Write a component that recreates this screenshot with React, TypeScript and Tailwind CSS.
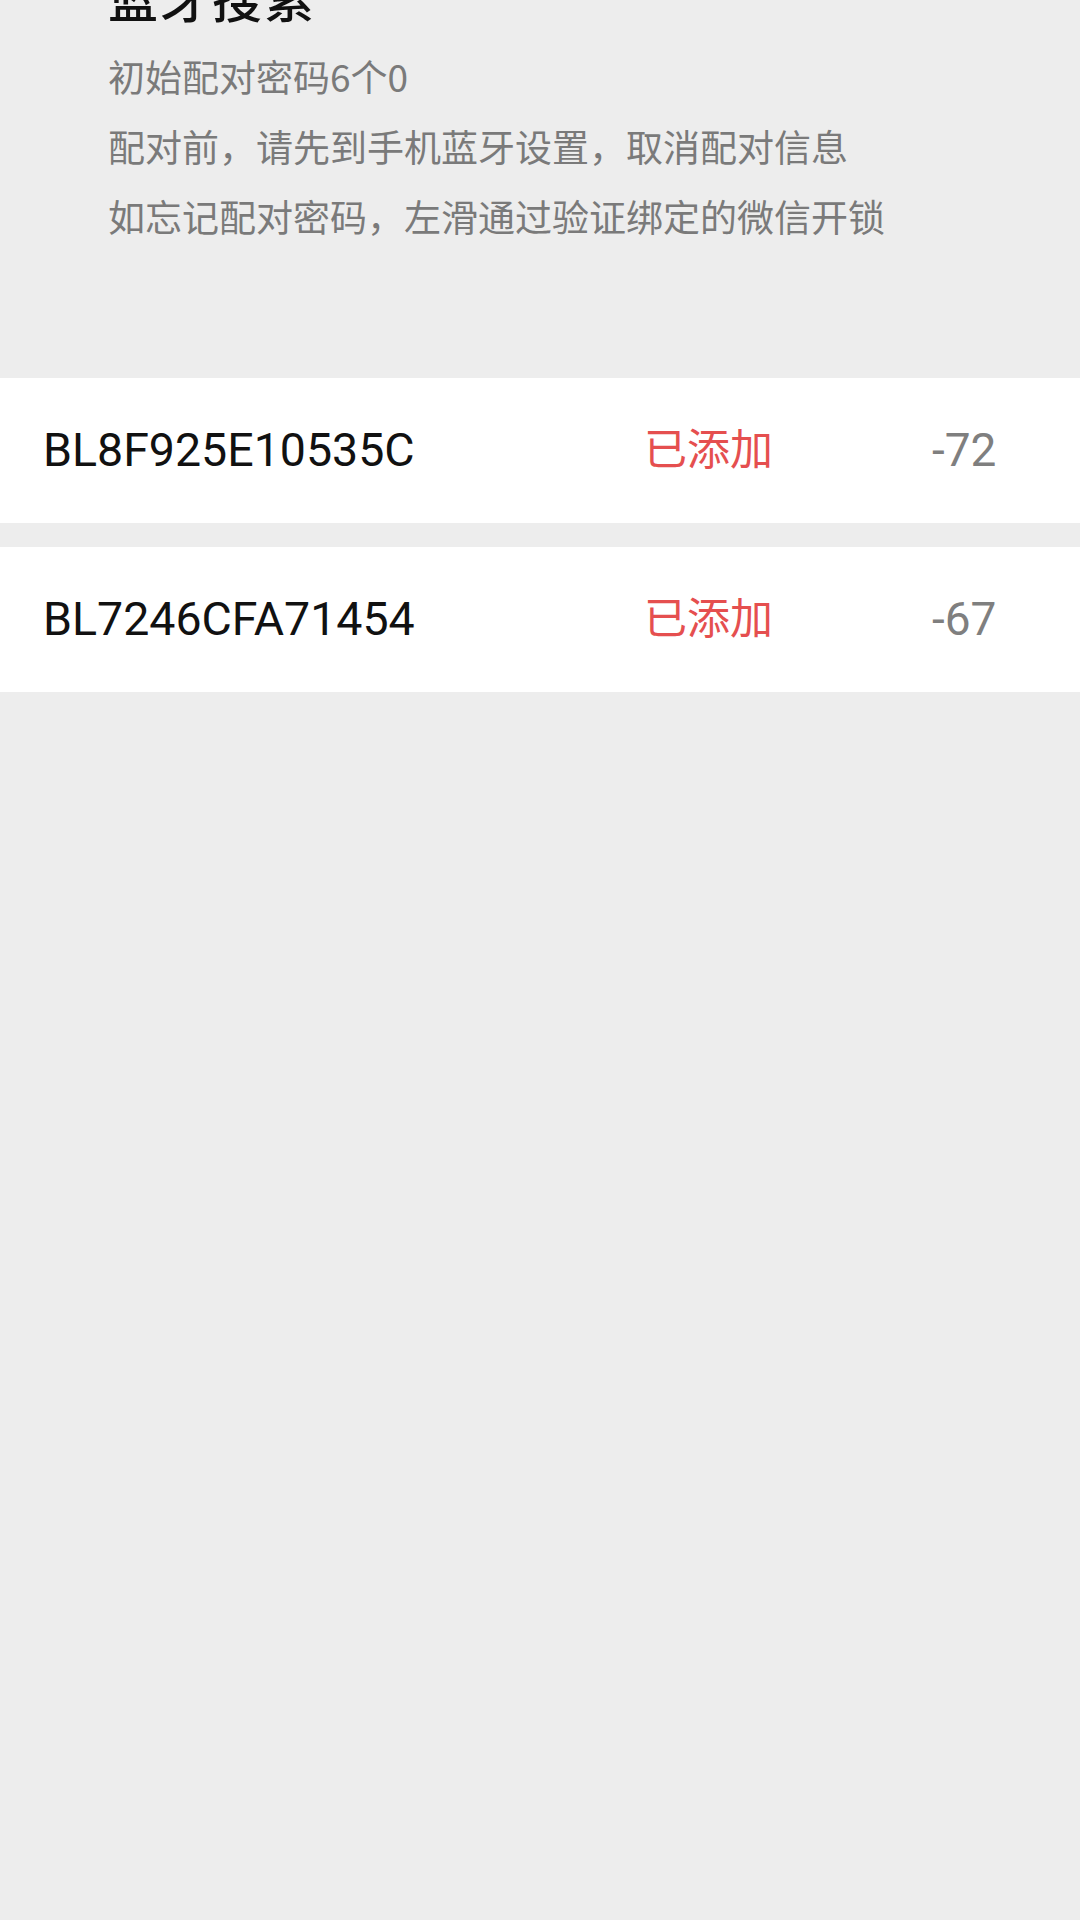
const cjk = { fontFamily: '"Noto Sans CJK SC", "Noto Sans", sans-serif' };
const latin = { fontFamily: 'Roboto, "Noto Sans CJK SC", sans-serif' };

type Device = { name: string; status: string; rssi: string };

const devices: Device[] = [
  { name: "BL8F925E10535C", status: "已添加", rssi: "-72" },
  { name: "BL7246CFA71454", status: "已添加", rssi: "-67" },
];

const tips = [
  "初始配对密码6个0",
  "配对前，请先到手机蓝牙设置，取消配对信息",
  "如忘记配对密码，左滑通过验证绑定的微信开锁",
];

function DeviceRow({ device }: { device: Device }) {
  return (
    <div className="flex h-[145px] items-center bg-white pl-[43px]">
      <div className="w-[601px] text-[46.5px] text-[#111111]" style={latin}>
        {device.name}
      </div>
      <div className="w-[288px] pb-[8px] text-[43px] text-[#e54f4f]" style={cjk}>
        {device.status}
      </div>
      <div className="text-[46px] text-[#7f7f7f]" style={latin}>
        {device.rssi}
      </div>
    </div>
  );
}

export default function App() {
  return (
    <div className="min-h-[1920px] w-[1080px] overflow-hidden bg-[#ededed]">
      <div className="px-[108px] pb-[127px]">
        <h1
          className="mt-[-30px] h-[52px] text-[50px] font-medium leading-[52px] tracking-[2px] text-[#111111]"
          style={cjk}
        >
          蓝牙搜索
        </h1>
        <div className="mt-[19px] flex flex-col">
          {tips.map((t) => (
            <p key={t} className="text-[37px] leading-[70px] text-[#7a7a7a]" style={cjk}>
              {t}
            </p>
          ))}
        </div>
      </div>
      <div className="flex flex-col gap-[24px]">
        {devices.map((d) => (
          <DeviceRow key={d.name} device={d} />
        ))}
      </div>
    </div>
  );
}
